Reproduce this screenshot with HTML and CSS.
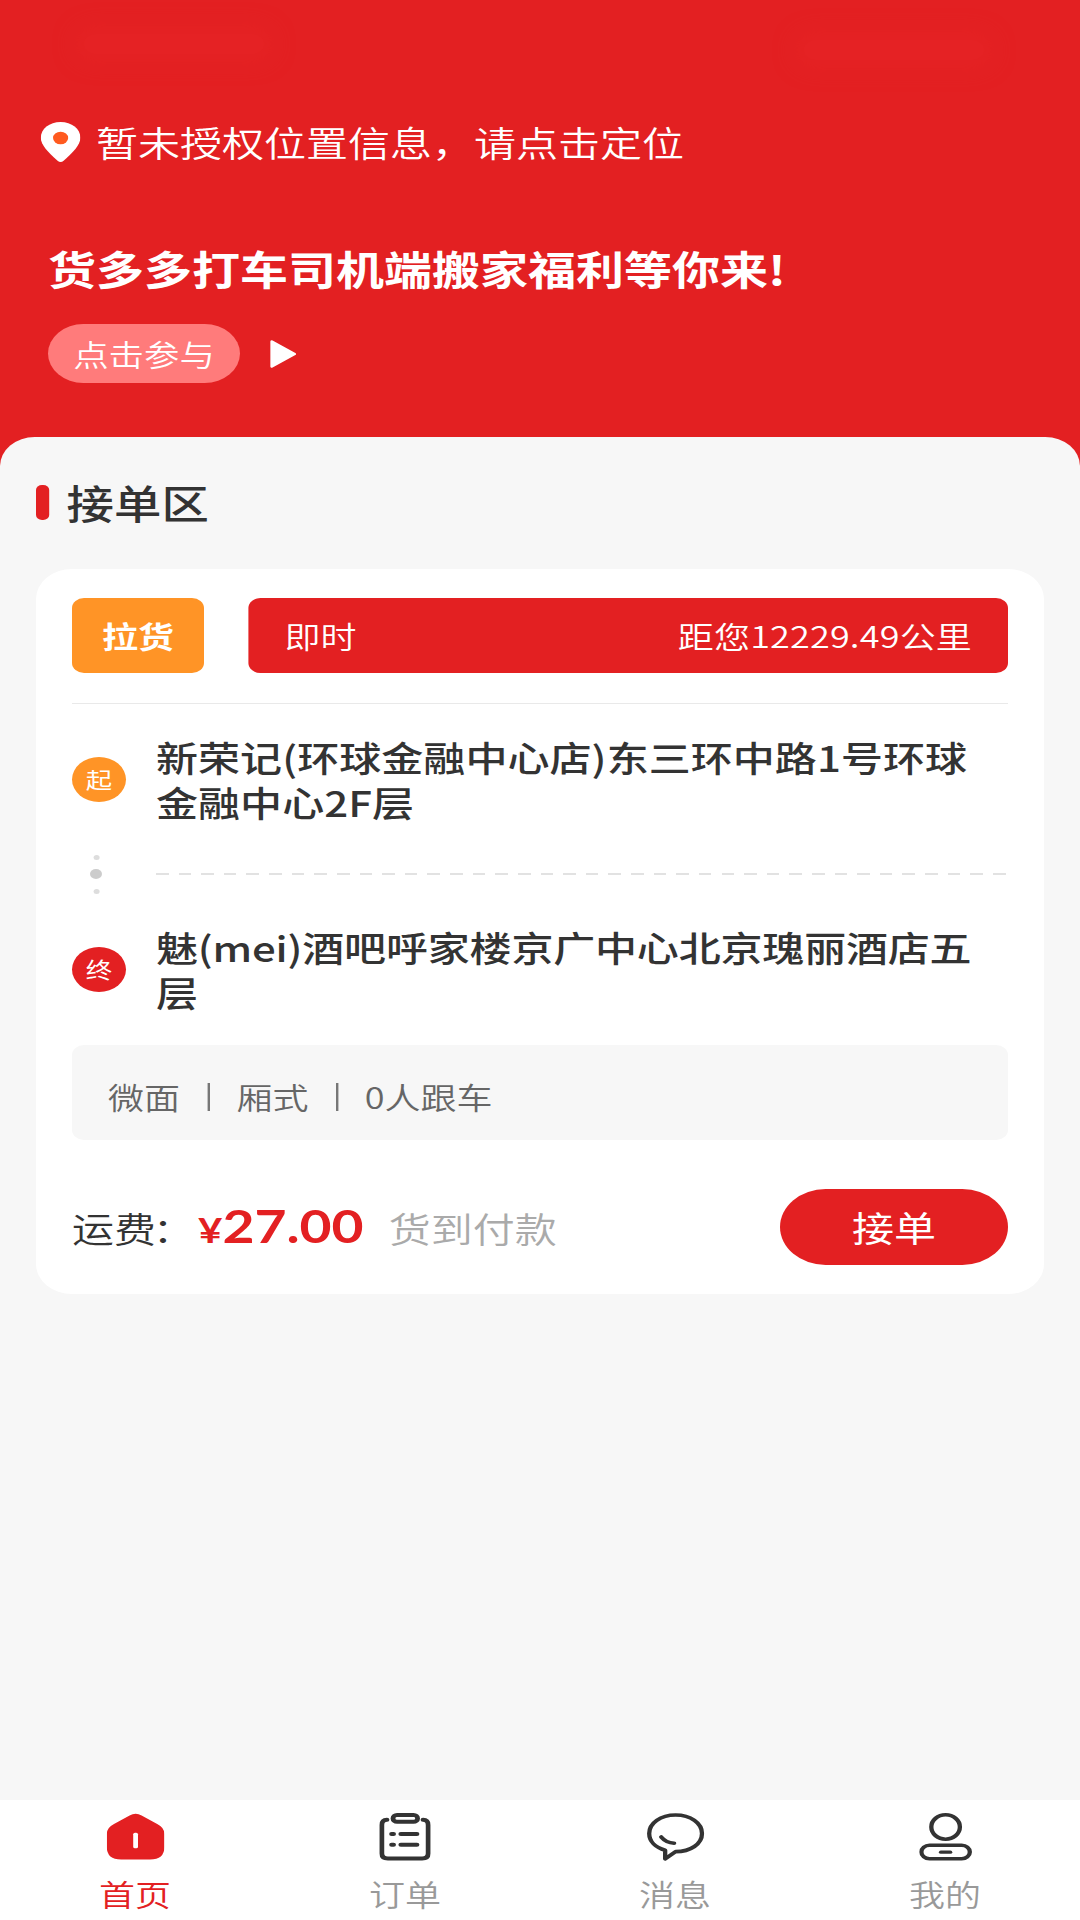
FILE: index.html
```html
<!DOCTYPE html>
<html lang="zh-CN">
<head>
<meta charset="utf-8">
<title>接单区</title>
<link rel="stylesheet" href="styles.css">
</head>
<body>
<div class="app">
  <header class="header">
    <div class="status"><i class="smudge"></i><i class="smudge right"></i></div>
    <div class="location">
      <svg class="pin" viewBox="0 0 33 40" width="33" height="40"><path d="M16.500 0C7.200 0 0 6.800 0 15.800c0 7.400 6.400 14.600 14 23 1.600 1.600 3.400 1.600 5 0 7.600-8.400 14-15.600 14-23C33 6.800 25.800 0 16.500 0z" fill="#fff"/><circle cx="16.500" cy="16" r="6.300" fill="#ff5a1f"/></svg>
      <span class="location-text">暂未授权位置信息，请点击定位</span>
    </div>
    <h1 class="title">货多多打车司机端搬家福利等你来!</h1>
    <div class="join">
      <span class="join-pill">点击参与</span>
      <svg viewBox="0 0 22 28" width="22" height="28"><path d="M1.500 1.500L20.500 14 1.500 26.500z" fill="#fff" stroke="#fff" stroke-width="2.400" stroke-linejoin="round"/></svg>
    </div>
  </header>
  <main class="panel">
    <h2 class="section">接单区</h2>
    <article class="card">
      <div class="card-head">
        <span class="tag">拉货</span>
        <div class="bar"><span>即时</span><span class="distance">距您12229.49公里</span></div>
      </div>
      <div class="stop">
        <span class="badge">起</span>
        <p class="address">新荣记(环球金融中心店)东三环中路1号环球金融中心2F层</p>
      </div>
      <div class="between">
        <div class="dots"><i></i><i class="big"></i><i></i></div>
        <div class="dash"></div>
      </div>
      <div class="stop">
        <span class="badge end">终</span>
        <p class="address to">魅(mei)酒吧呼家楼京广中心北京瑰丽酒店五层</p>
      </div>
      <div class="info"><span>微面</span><i></i><span>厢式</span><i></i><span>0人跟车</span></div>
      <div class="pay">
        <span class="fee">运费<span class="colon">：</span></span>
        <span class="price"><small>¥</small>27.00</span>
        <span class="method">货到付款</span>
        <button class="accept">接单</button>
      </div>
    </article>
  </main>
  <nav class="tabs">
    <a class="tab active">
      <svg viewBox="0 0 48 48" width="48" height="48"><path fill="#e32022" d="M19 2.500Q24-.8 29 2.500L42 11Q48 14.500 48 21V34Q48 46.500 36 46.500H12Q0 46.500 0 34V21Q0 14.500 6 11z"/><rect x="22" y="19.800" width="4" height="15.500" rx="1.500" fill="#fff"/></svg>
      <span>首页</span>
    </a>
    <a class="tab">
      <svg viewBox="0 0 43 48" width="43" height="48" fill="none" stroke="#333" stroke-width="4" stroke-linecap="round"><path d="M6.500 6.800Q2.200 7 2.200 12V40.500Q2.200 45.500 7.200 45.500H35.800Q40.800 45.500 40.800 40.500V12Q40.800 7 36.500 6.800"/><rect x="11.500" y="2" width="20.500" height="6.800" rx="3.400"/><path d="M10.300 21H12M18 21H31.500M10.300 31.800H12M18 31.800H31.500"/></svg>
      <span>订单</span>
    </a>
    <a class="tab">
      <svg viewBox="0 0 48 48" width="48" height="48" fill="none" stroke="#333" stroke-width="3.600" stroke-linejoin="round"><path d="M15.300 37.200C7.500 34.500 2 28.500 2 20.500 2 10 11.500 2 24 2s22 8 22 18.500S36.500 38.600 24 38.600L15.300 45.800z"/><path d="M12 24Q16 29.800 22.800 30.200" stroke-linecap="round"/></svg>
      <span>消息</span>
    </a>
    <a class="tab">
      <svg viewBox="0 0 44 48" width="44" height="48" fill="none" stroke="#333" stroke-width="3.600" stroke-linecap="round"><ellipse cx="22" cy="14" rx="11.900" ry="12.200"/><rect x="1.800" y="32.200" width="40.400" height="13.600" rx="6.800"/><path d="M18 39.200H26" stroke-width="3.200"/></svg>
      <span>我的</span>
    </a>
  </nav>
</div>
</body>
</html>
```
FILE: styles.css
```css
* { box-sizing: border-box; margin: 0; padding: 0; }
html, body { width: 1080px; height: 1920px; overflow: hidden; }
body { font-family: "Noto Sans CJK SC", sans-serif; color: #333; background: #f7f7f7; }

/* The layout is 900 units wide, stretched to fill the window. */
.app {
  width: 900px; height: 1920px;
  display: flex; flex-direction: column;
  transform: scaleX(1.2); transform-origin: 0 0;
  background: #e32022;
}

.header { height: 437px; color: #fff; }
.status { height: 122px; display: flex; justify-content: space-between; padding: 34px 80px 0 70px; }
.smudge { width: 150px; height: 20px; border-radius: 10px; background: #e72526; box-shadow: 0 0 18px 8px #e72526; opacity: .55; }
.smudge.right { margin-top: 6px; }
.location { height: 40px; display: flex; align-items: center; padding-left: 33.500px; gap: 13.500px; }
.location-text { font-size: 35px; line-height: 40px; font-weight: 350; }
.title { margin: 79px 0 0 40px; font-size: 40px; line-height: 54px; font-weight: 700; white-space: nowrap; }
.join { margin: 29px 0 0 40px; display: flex; align-items: center; gap: 24.500px; }
.join-pill {
  width: 160px; height: 59px; border-radius: 30px; background: #ff7b7b;
  font-size: 29.500px; line-height: 59px; text-align: center; font-weight: 350;
}

.panel { flex: 1; background: #f7f7f7; border-radius: 29px 29px 0 0; padding: 33px 30px 0; }
.section { display: flex; align-items: center; gap: 15px; height: 64px; font-size: 39.500px; line-height: 64px; font-weight: 500; }
.section::before { content: ""; width: 10.500px; height: 35px; border-radius: 5px; background: #e32022; margin-top: 1px; }

.card { margin-top: 35px; height: 725px; background: #fff; border-radius: 30px; padding: 29px 30px; }
.card-head { display: flex; gap: 37px; height: 106px; padding-bottom: 31px; border-bottom: 1.500px solid #e9e9e9; }
.tag { width: 110px; height: 75px; border-radius: 10px; background: #ff9426; color: #fff; font-size: 30px; line-height: 75px; text-align: center; font-weight: 700; }
.bar {
  flex: 1; height: 75px; border-radius: 10px; padding: 0 30px; background: #e32022; color: #fff;
  display: flex; justify-content: space-between; font-size: 30px; line-height: 75px; font-weight: 350;
}
.distance { letter-spacing: .15px; }
.stop { display: flex; align-items: center; gap: 25px; height: 92px; }
.card-head + .stop { margin-top: 29px; }
.badge { width: 45px; height: 45px; border-radius: 50%; background: #ff9426; color: #fff; font-size: 22px; line-height: 43px; text-align: center; }
.badge.end { background: #e32022; }
.address { flex: 1; padding-right: 20px; font-size: 35px; line-height: 45.500px; font-weight: 500; letter-spacing: .05px; }
.address.to { letter-spacing: -.15px; }
.between { display: flex; align-items: center; height: 98px; }
.dots { width: 40px; display: flex; flex-direction: column; align-items: center; gap: 9.500px; }
.dots i { width: 5px; height: 5px; border-radius: 50%; background: #ddd; }
.dots .big { width: 10px; height: 10px; background: #ccc; }
.dash { flex: 1; height: 1.500px; margin-left: 30px; background: repeating-linear-gradient(90deg, #e2e2e2 0 10.500px, transparent 10.500px 18.850px); }
.info {
  margin-top: 30px; height: 95px; border-radius: 10px; background: #f7f7f7; padding: 7px 30px 0;
  display: flex; align-items: center; font-size: 30px; line-height: 88px; color: #666; font-weight: 350;
}
.info i { width: 2px; height: 28px; background: #777; margin: 2px 22.500px 0; }
.pay { display: flex; align-items: center; height: 76px; margin-top: 49px; }
.fee { font-size: 35px; font-weight: 350; width: 105px; white-space: nowrap; }
.colon { margin-left: -3px; }
.price { font: 700 46px/76px Lato, sans-serif; color: #e32022; }
.price small { font-size: 35px; }
.method { margin-left: 21px; font-size: 35px; font-weight: 350; color: #aaa; }
.accept {
  margin-left: auto; width: 190px; height: 76px; border: 0; border-radius: 38px; background: #e32022;
  color: #fff; font: 400 35px/76px "Noto Sans CJK SC", sans-serif;
}

.tabs { height: 120.500px; background: #fff; display: flex; }
.tab { flex: 1; display: flex; flex-direction: column; align-items: center; padding-top: 13px; font-size: 30px; line-height: 40px; color: #999; font-weight: 350; }
.tab span { margin-top: 12px; }
.tab.active { color: #e32022; }
```
